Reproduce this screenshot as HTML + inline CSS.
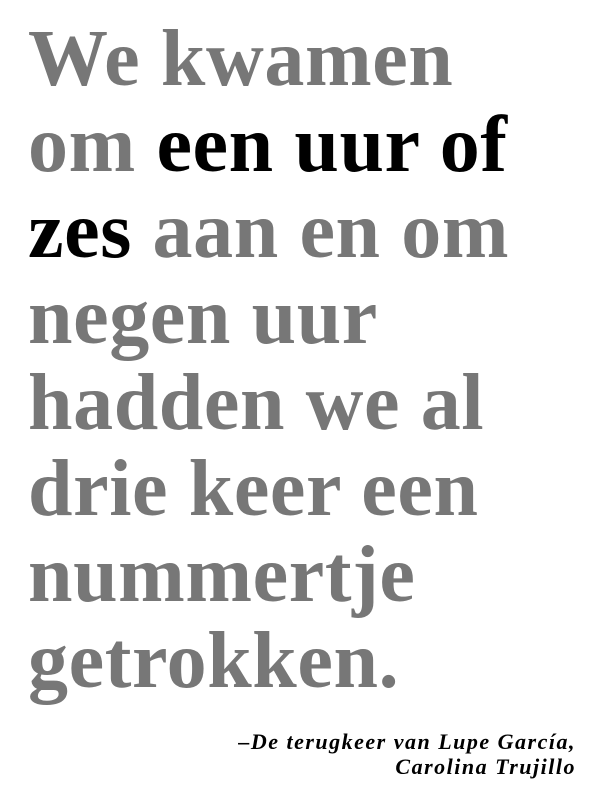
<!DOCTYPE html>
<html><head><meta charset="utf-8"><style>
html,body{margin:0;padding:0;background:#fff;width:600px;height:800px;overflow:hidden}
.q{position:absolute;left:28px;top:16px;font-family:"Liberation Serif",serif;font-weight:bold;font-size:80px;line-height:86px;color:#777;white-space:nowrap;letter-spacing:0.6px}
.q b{color:#000}
.a{position:absolute;right:24px;top:729px;font-family:"Liberation Serif",serif;font-style:italic;font-weight:bold;font-size:22px;line-height:25px;text-align:right;color:#000;white-space:nowrap;letter-spacing:1.5px}
</style></head><body>
<div class="q">We kwamen<br>om <b>een uur of</b><br><b>zes</b> aan en om<br>negen uur<br>hadden we al<br>drie keer een<br>nummertje<br>getrokken.</div>
<div class="a">–De terugkeer van Lupe García,<br>Carolina Trujillo</div>
</body></html>
